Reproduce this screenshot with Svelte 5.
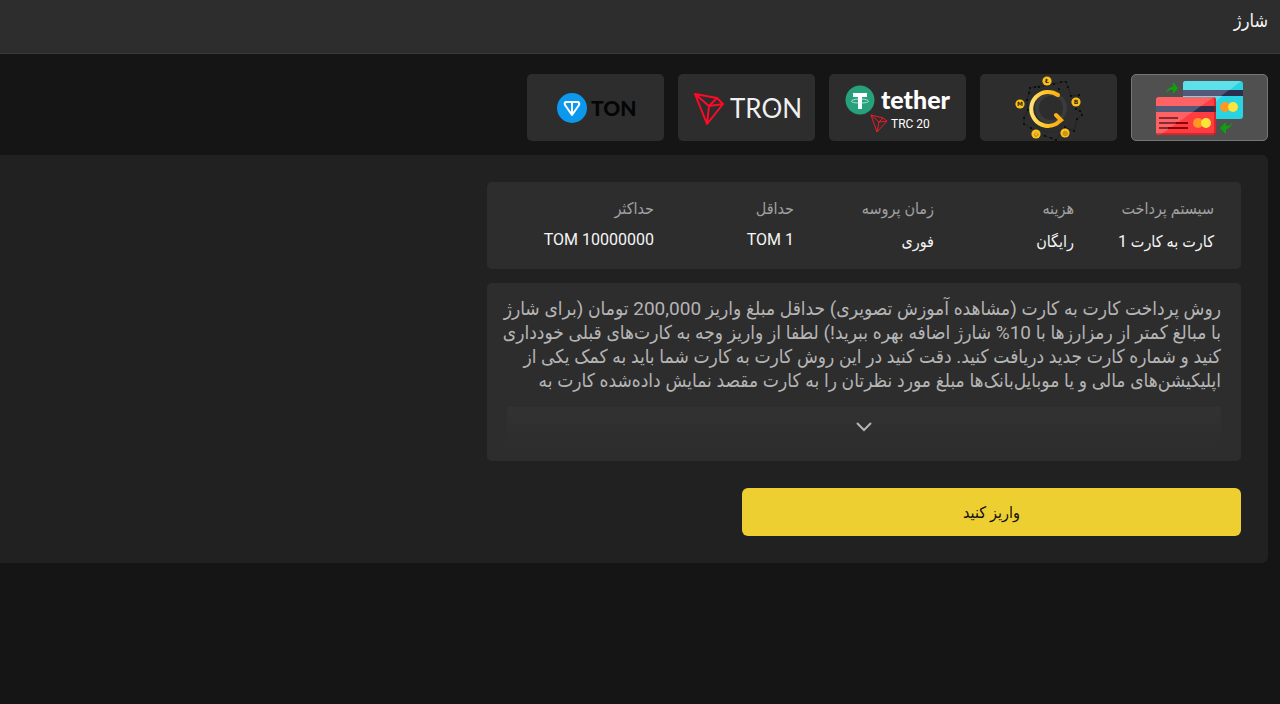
<script>
	let active = $state('card');
	let expanded = $state(false);

	const methods = [
		{ id: 'card', label: 'کارت به کارت' },
		{ id: 'crypto', label: 'رمزارز' },
		{ id: 'tether', label: 'tether TRC 20' },
		{ id: 'tron', label: 'TRON' },
		{ id: 'ton', label: 'TON' }
	];

	const details = [
		{ name: 'سیستم پرداخت', value: 'کارت به کارت 1' },
		{ name: 'هزینه', value: 'رایگان' },
		{ name: 'زمان پروسه', value: 'فوری' },
		{ name: 'حداقل', value: 'TOM 1', latin: true },
		{ name: 'حداکثر', value: 'TOM 10000000', latin: true }
	];

	const description = [
		'روش پرداخت کارت به کارت (مشاهده آموزش تصویری) حداقل مبلغ واریز 200,000 تومان (برای شارژ',
		'با مبالغ کمتر از رمزارزها با 10% شارژ اضافه بهره ببرید!) لطفا از واریز وجه به کارت‌های قبلی خودداری',
		'کنید و شماره کارت جدید دریافت کنید. دقت کنید در این روش کارت به کارت شما باید به کمک یکی از',
		'اپلیکیشن‌های مالی و یا موبایل‌بانک‌ها مبلغ مورد نظرتان را به کارت مقصد نمایش داده‌شده کارت به'
	];

	// small coins around the ring
	const coins = [
		{ x: 46, y: 6, sign: 'Ł' },
		{ x: 75, y: 27, sign: 'B' },
		{ x: 64, y: 58, sign: '◎' },
		{ x: 35, y: 59, sign: '◇' },
		{ x: 19, y: 29, sign: 'M' }
	];

	const nodes = [
		[29, 13], [34, 12], [38, 12], [53, 9], [60, 7], [65, 7], [67, 12], [70, 21],
		[78, 20], [75, 34], [79, 36], [81, 40], [76, 44], [73, 56], [64, 52], [55, 65],
		[50, 63], [44, 61], [30, 53], [23, 49], [23, 43], [27, 35], [26, 25], [28, 18], [58, 14]
	];
</script>

<div class="page" dir="rtl">
	<header>
		<h1>شارژ</h1>
	</header>

	<nav class="methods">
		{#each methods as { id, label }}
			<button class="method" class:active={active === id} aria-label={label} onclick={() => (active = id)}>
				{#if id === 'card'}
					<svg width="96" height="64" viewBox="0 0 96 64">
						<defs>
							<clipPath id="blue"><rect x="31" y="5" width="60" height="38" rx="3" /></clipPath>
							<clipPath id="red"><rect x="4" y="21" width="60" height="38" rx="3" /></clipPath>
						</defs>
						<g clip-path="url(#blue)">
							<path fill="#2ad3e2" d="M31 5h60v38H31z" />
							<path fill="#5ee0ea" d="M31 5h58L42 43H31z" />
							<path fill="#2b2f4d" d="M31 14h60v6H31z" />
							<path fill="#535978" d="M31 14h46l-8 6H31z" />
						</g>
						<circle cx="73" cy="31" r="5" fill="#ff9722" />
						<circle cx="81" cy="31" r="5" fill="#fbe53c" />
						<g clip-path="url(#red)">
							<path fill="#ff3d40" d="M4 21h60v38H4z" />
							<path fill="#ff6265" d="M4 21h58L8 59H4z" />
							<path fill="#2b2f4d" d="M4 30h60v6H4z" />
							<path fill="#535978" d="M4 30h45l-8 6H4z" />
							<path stroke="#b80f17" d="M63 21v38M4 58h60" />
						</g>
						<path stroke="#842b34" stroke-width="2" d="M7 42h19M7 47h29M7 52h29" />
						<path stroke="#8c0005" stroke-width="2" d="M24 47h12M16 52h20" />
						<circle cx="46" cy="47" r="5" fill="#ff9722" />
						<circle cx="54" cy="47" r="5" fill="#fbe53c" />
						<path fill="#0ba20b" d="M14 17c1-4 4-6 7-6V6l5 6-5 6v-4c-3-1-5 1-7 3z" />
						<path fill="#0ba20b" d="M80 47c-1 4-4 6-6 6v5l-6-6 6-6v4c3 0 4-1 6-3z" />
					</svg>
				{:else if id === 'crypto'}
					<svg width="96" height="66" viewBox="0 0 96 66">
						<defs>
							<linearGradient id="gold">
								<stop offset="0" stop-color="#ffe270" />
								<stop offset=".5" stop-color="#ffc323" />
								<stop offset="1" stop-color="#f9ab13" />
							</linearGradient>
						</defs>
						<polygon fill="none" stroke="#222" points={nodes.slice(0, 24).join(' ')} />
						<circle cx="50" cy="33" r="14" fill="none" stroke="#3b3b3b" stroke-width="4" />
						<path fill="none" stroke="#222" stroke-dasharray="1 2" d="M27 22a25 25 0 0 1 43-4M31 47a23 23 0 0 0 35 4" />
						{#each nodes as [x, y]}
							<circle cx={x} cy={y} r="1" fill="#070707" />
						{/each}
						<path
							fill="none"
							stroke="url(#gold)"
							stroke-width="4"
							stroke-linecap="round"
							d="M57 20A17 17 0 1 0 55 49L60 45L55 40"
						/>
						{#each coins as { x, y, sign }}
							<circle cx={x} cy={y} r="4.6" fill="#fcc01c" />
							<text {x} y={y + 2} class="coin">{sign}</text>
						{/each}
					</svg>
				{:else if id === 'tether'}
					<svg width="108" height="56" viewBox="0 0 108 56">
						<circle cx="16" cy="20" r="14.5" fill="#26a17b" />
						<path fill="#fff" d="M9 13h14v4h-5v12h-4V17H9z" />
						<path fill="none" stroke="#d5eee5" stroke-width=".8" d="M14 19c-9 1-9 4 2 4s11-3 2-4" />
						<text x="37" y="29" class="tether">tether</text>
						<path fill="none" stroke="#ec1c28" stroke-linejoin="round" d="M27 35l12 3 4 3-10 11zM27 35l8 7 4-4M35 42l8-1M35 42l-2 10" />
						<text x="47" y="48" class="trc">TRC 20</text>
					</svg>
				{:else if id === 'tron'}
					<svg width="112" height="40" viewBox="0 0 112 40">
						<path fill="none" stroke="#ff0a26" stroke-width="2" stroke-linejoin="round" d="M4 6l22 4 6 6-16 20zM4 6l14 12 8-8M18 18l14-2M18 18l-2 18" />
						<text x="39" y="30" class="tron">TRON</text>
						<circle cx="84" cy="21" r="1" fill="#fff" />
					</svg>
				{:else}
					<svg width="84" height="36" viewBox="0 0 84 36">
						<circle cx="18" cy="18" r="15" fill="#0b98ed" />
						<path fill="none" stroke="#fff" stroke-width="2" stroke-linejoin="round" d="M12 12h12q2 1 1 3l-7 10-7-10q-1-2 1-3zM18 12v13" />
						<text x="37" y="26" class="ton">TON</text>
					</svg>
				{/if}
			</button>
		{/each}
	</nav>

	<main>
		<dl class="card details">
			{#each details as { name, value, latin }}
				<div>
					<dt>{name}</dt>
					<dd class:latin>{value}</dd>
				</div>
			{/each}
		</dl>

		<section class="card about">
			<p>
				{#each description as line}
					<span>{line}</span>
				{/each}
			</p>
			<button class="more" aria-label="بیشتر" aria-expanded={expanded} onclick={() => (expanded = !expanded)}>
				<svg width="16" height="10" viewBox="0 0 16 10">
					<path fill="none" stroke="#b5b5b5" stroke-width="2" d="M1 1l7 7 7-7" />
				</svg>
			</button>
		</section>

		<button class="submit">واریز کنید</button>
	</main>
</div>

<style>
	:global(body) {
		background: #151515;
	}
	.page {
		font-family: Roboto, 'DejaVu Sans Condensed', 'DejaVu Sans', sans-serif;
		font-size: 16px;
		color: #f5f5f5;
	}
	button {
		font: inherit;
		border: 0;
		padding: 0;
		cursor: pointer;
	}
	header {
		height: 53px;
		padding: 0 12px;
		background: #2d2d2d;
		border-bottom: 1px solid #3a3a3a;
	}
	h1 {
		margin: 0;
		font-size: 18px;
		font-weight: 400;
		line-height: 42px;
	}
	.methods {
		display: flex;
		flex-wrap: wrap;
		gap: 14px;
		padding: 20px 12px 14px;
	}
	.method {
		display: flex;
		justify-content: center;
		align-items: center;
		box-sizing: border-box;
		width: 137px;
		height: 67px;
		border: 1px solid transparent;
		border-radius: 5px;
		background: #2d2d2d;
		direction: ltr;
	}
	.method.active {
		background: #505050;
		border-color: #757575;
	}
	.coin {
		font: bold 6px 'DejaVu Sans', sans-serif;
		text-anchor: middle;
		fill: #33270a;
	}
	.tether {
		font: 900 25px Lato, sans-serif;
		fill: #fff;
	}
	.trc {
		font: 12px Roboto, sans-serif;
		fill: #fff;
	}
	.tron {
		font: 400 26px Lato, sans-serif;
		fill: #f0f0f0;
	}
	.ton {
		font: 900 21px Lato, sans-serif;
		fill: #050505;
	}
	main {
		display: flex;
		flex-direction: column;
		align-items: flex-start;
		margin-right: 12px;
		padding: 27px;
		background: #212121;
		border-radius: 0 6px 6px 0;
	}
	.card {
		box-sizing: border-box;
		width: 100%;
		max-width: 754px;
		margin: 0 0 14px;
		border-radius: 5px;
		background: #2d2d2d;
	}
	.details {
		display: grid;
		grid-template-columns: repeat(5, 1fr);
		padding: 14px 27px 11px;
	}
	dt {
		line-height: 26px;
		color: #a0a0a0;
		white-space: nowrap;
	}
	dd {
		margin: 0;
		padding-top: 4px;
		line-height: 32px;
	}
	dd.latin {
		line-height: 28px;
	}
	.about {
		margin-bottom: 27px;
		padding: 14px 20px 15px;
	}
	p {
		margin: 0 0 14px;
		font-size: 19px;
		line-height: 24px;
		color: #b5b5b5;
	}
	p span {
		display: block;
		white-space: nowrap;
	}
	.more {
		display: flex;
		justify-content: center;
		align-items: center;
		width: 100%;
		height: 39px;
		background: linear-gradient(#323232, #2d2d2d);
	}
	.submit {
		width: 100%;
		max-width: 499px;
		height: 48px;
		border-radius: 6px;
		background: #edcf31;
		color: #111;
	}
</style>
